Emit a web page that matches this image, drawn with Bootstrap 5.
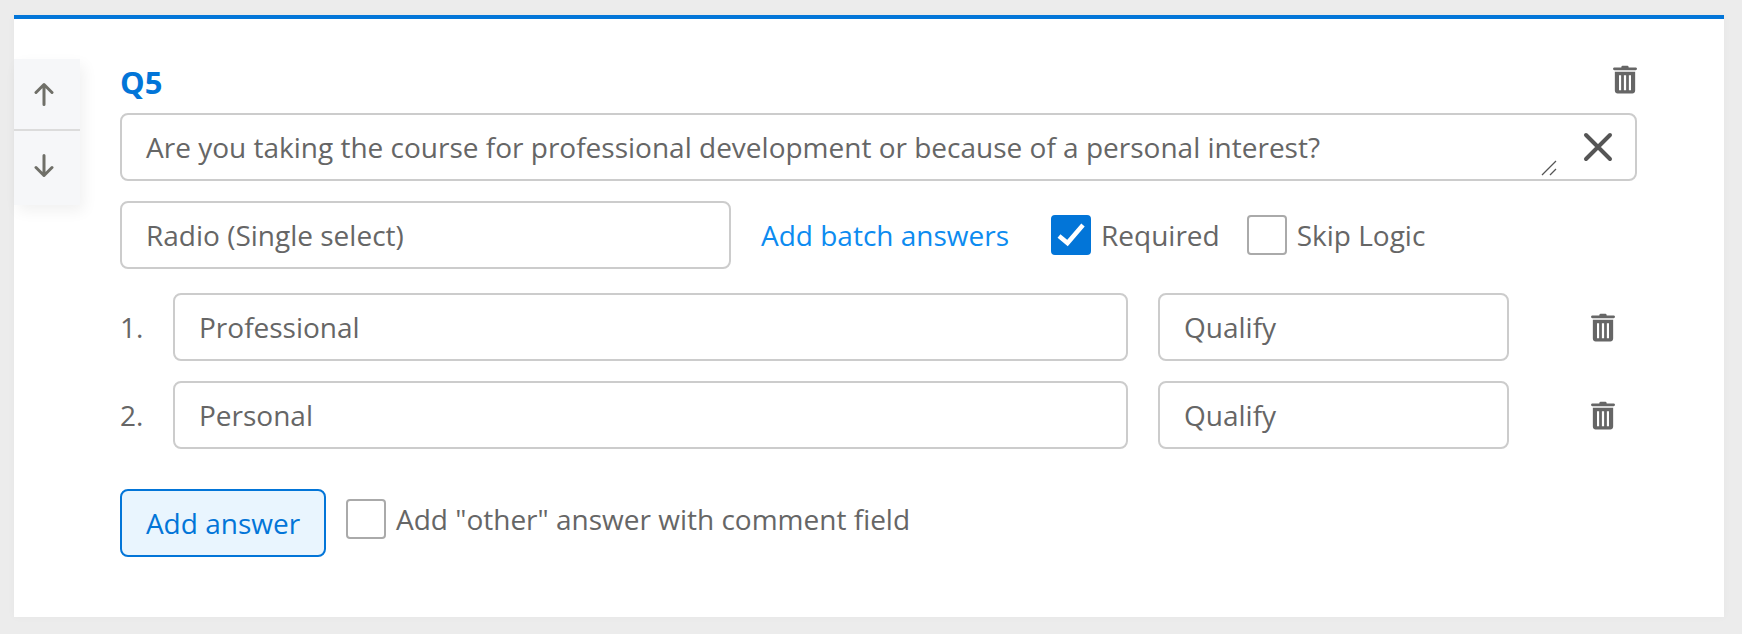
<!DOCTYPE html>
<html lang="en">
<head>
<meta charset="utf-8">
<title>Q5</title>
<link rel="stylesheet" href="https://cdn.jsdelivr.net/npm/bootstrap@5.3.0/dist/css/bootstrap.min.css">
<style>
html,body{height:100%}
body{background:#ececec;font-family:"Open Sans",sans-serif;font-size:28px;color:#666;padding:15px 18px 17px 14px;overflow:hidden}
.qcard{background:#fff;border-top:4px solid #0275d8;height:602px;box-shadow:0 0 8px rgba(0,0,0,.03)}
.movers{width:66px;height:146px;margin-top:40px;background:#f6f7f9;box-shadow:4px 6px 14px rgba(0,0,0,.06)}
.mup{height:70px}
.mdown{height:76px;border-top:2px solid #dcdcdc;padding-bottom:5px}
.movers svg{margin-left:-6px}
.qbody{width:1517px;margin-left:40px;padding-top:40px}
.qtitle{color:#0275d8;font-weight:700;font-size:31px;line-height:46px;height:54px}
.qbox{border:2px solid #ccc;border-radius:8px;height:68px;padding:0 24px;display:flex;align-items:center;background:#fff;color:#666;white-space:nowrap}
.qtext{height:68px;margin-bottom:20px}
.qx{margin-left:auto;margin-right:-2px}
.grip{position:absolute;right:78px;bottom:3px}
.qtrash{margin-top:6px}
.typebox{width:611px}
.batch{color:#0d8bf0;text-decoration:none;margin-left:30px;width:290px}
.cb{width:40px;height:40px;border:2px solid #aaa;border-radius:4px;flex:none;display:flex;align-items:center;justify-content:center;margin-right:10px}
.cb.on{background:#0275d8;border-color:#0275d8}
.lab{white-space:nowrap}
.skip{margin-left:27px}
.nr{width:53px}
.ans{width:955px}
.qual{width:351px;margin-left:30px}
.rowa{height:68px;margin-top:20px}
.rowa.first{margin-top:24px}
.trash2{margin-left:82px}
.addbtn{background:#e9f5fe;border:2px solid #0275d8;border-radius:8px;color:#0275d8;height:68px;width:206px;font-size:28px;padding:0;line-height:1}
.addbtn:hover{background:#e9f5fe;color:#0275d8;border-color:#0275d8}
.addrow{margin-top:40px}
.othercb{margin-left:20px;margin-top:-8px}
</style>
</head>
<body>
<div class="qcard d-flex">
  <div class="movers flex-shrink-0">
    <div class="mup d-flex align-items-center justify-content-center">
      <svg width="20" height="24" viewBox="0 0 20 24" fill="none" stroke="#6f6f68" stroke-width="3" stroke-linecap="round" stroke-linejoin="round"><path d="M10 22.500V2.500M2 10.500l8-8 8 8"/></svg>
    </div>
    <div class="mdown d-flex align-items-center justify-content-center">
      <svg width="20" height="24" viewBox="0 0 20 24" fill="none" stroke="#6f6f68" stroke-width="3" stroke-linecap="round" stroke-linejoin="round"><path d="M10 1.500v20M2 13.500l8 8 8-8"/></svg>
    </div>
  </div>
  <div class="qbody">
    <div class="qtitle d-flex justify-content-between">
      <span>Q5</span>
      <svg class="qtrash" width="24" height="29" viewBox="0 0 26 30" preserveAspectRatio="none"><path fill="#666" d="M9 2.500C9 1.200 10 .8 11 .8h4c1 0 2 .4 2 1.700h7.500c.8 0 1.500.6 1.500 1.500S25.300 5.500 24.500 5.500h-23C.7 5.500 0 4.800 0 4s.7-1.500 1.500-1.500zM2 7h22v19.500c0 1.900-1.400 3-3 3H5c-1.600 0-3-1.100-3-3z"/><path fill="#fff" d="M6.500 10.500h2.300v15.500H6.500zM11.800 10.500h2.400v15.500h-2.400zM17.200 10.500h2.300v15.500h-2.300z"/></svg>
    </div>
    <div class="qbox qtext position-relative">
      <span>Are you taking the course for professional development or because of a personal interest?</span>
      <svg class="qx" width="30" height="30" viewBox="0 0 30 30" stroke="#555" stroke-width="4" stroke-linecap="round"><path d="M3 3l24 24M27 3L3 27"/></svg>
      <svg class="grip" width="16" height="16" viewBox="0 0 16 16" stroke="#555" stroke-width="1.300"><path d="M1 15L15 1M9 15l6-6"/></svg>
    </div>
    <div class="d-flex align-items-center">
      <div class="qbox typebox">Radio (Single select)</div>
      <a class="batch" href="#">Add batch answers</a>
      <div class="d-flex align-items-center">
        <span class="cb on"><svg width="28" height="24" viewBox="0 0 28 24" fill="none" stroke="#fff" stroke-width="4.500"><path d="M2 13l8.500 7L26 2"/></svg></span>
        <span class="lab">Required</span>
      </div>
      <div class="d-flex align-items-center skip">
        <span class="cb"></span>
        <span class="lab">Skip Logic</span>
      </div>
    </div>
    <div class="d-flex align-items-center rowa first">
      <span class="nr">1.</span>
      <div class="qbox ans">Professional</div>
      <div class="qbox qual">Qualify</div>
      <svg class="trash2" width="24" height="29" viewBox="0 0 26 30" preserveAspectRatio="none"><path fill="#666" d="M9 2.500C9 1.200 10 .8 11 .8h4c1 0 2 .4 2 1.700h7.500c.8 0 1.500.6 1.500 1.500S25.300 5.500 24.500 5.500h-23C.7 5.500 0 4.800 0 4s.7-1.500 1.500-1.500zM2 7h22v19.500c0 1.900-1.400 3-3 3H5c-1.600 0-3-1.100-3-3z"/><path fill="#fff" d="M6.500 10.500h2.300v15.500H6.500zM11.800 10.500h2.400v15.500h-2.400zM17.200 10.500h2.300v15.500h-2.300z"/></svg>
    </div>
    <div class="d-flex align-items-center rowa">
      <span class="nr">2.</span>
      <div class="qbox ans">Personal</div>
      <div class="qbox qual">Qualify</div>
      <svg class="trash2" width="24" height="29" viewBox="0 0 26 30" preserveAspectRatio="none"><path fill="#666" d="M9 2.500C9 1.200 10 .8 11 .8h4c1 0 2 .4 2 1.700h7.500c.8 0 1.500.6 1.500 1.500S25.300 5.500 24.500 5.500h-23C.7 5.500 0 4.800 0 4s.7-1.500 1.500-1.500zM2 7h22v19.500c0 1.900-1.400 3-3 3H5c-1.600 0-3-1.100-3-3z"/><path fill="#fff" d="M6.500 10.500h2.300v15.500H6.500zM11.800 10.500h2.400v15.500h-2.400zM17.200 10.500h2.300v15.500h-2.300z"/></svg>
    </div>
    <div class="d-flex align-items-center addrow">
      <button type="button" class="btn addbtn">Add answer</button>
      <div class="d-flex align-items-center othercb">
        <span class="cb"></span>
        <span class="lab">Add "other" answer with comment field</span>
      </div>
    </div>
  </div>
</div>
<script src="https://cdn.jsdelivr.net/npm/bootstrap@5.3.0/dist/js/bootstrap.bundle.min.js"></script>
</body>
</html>
